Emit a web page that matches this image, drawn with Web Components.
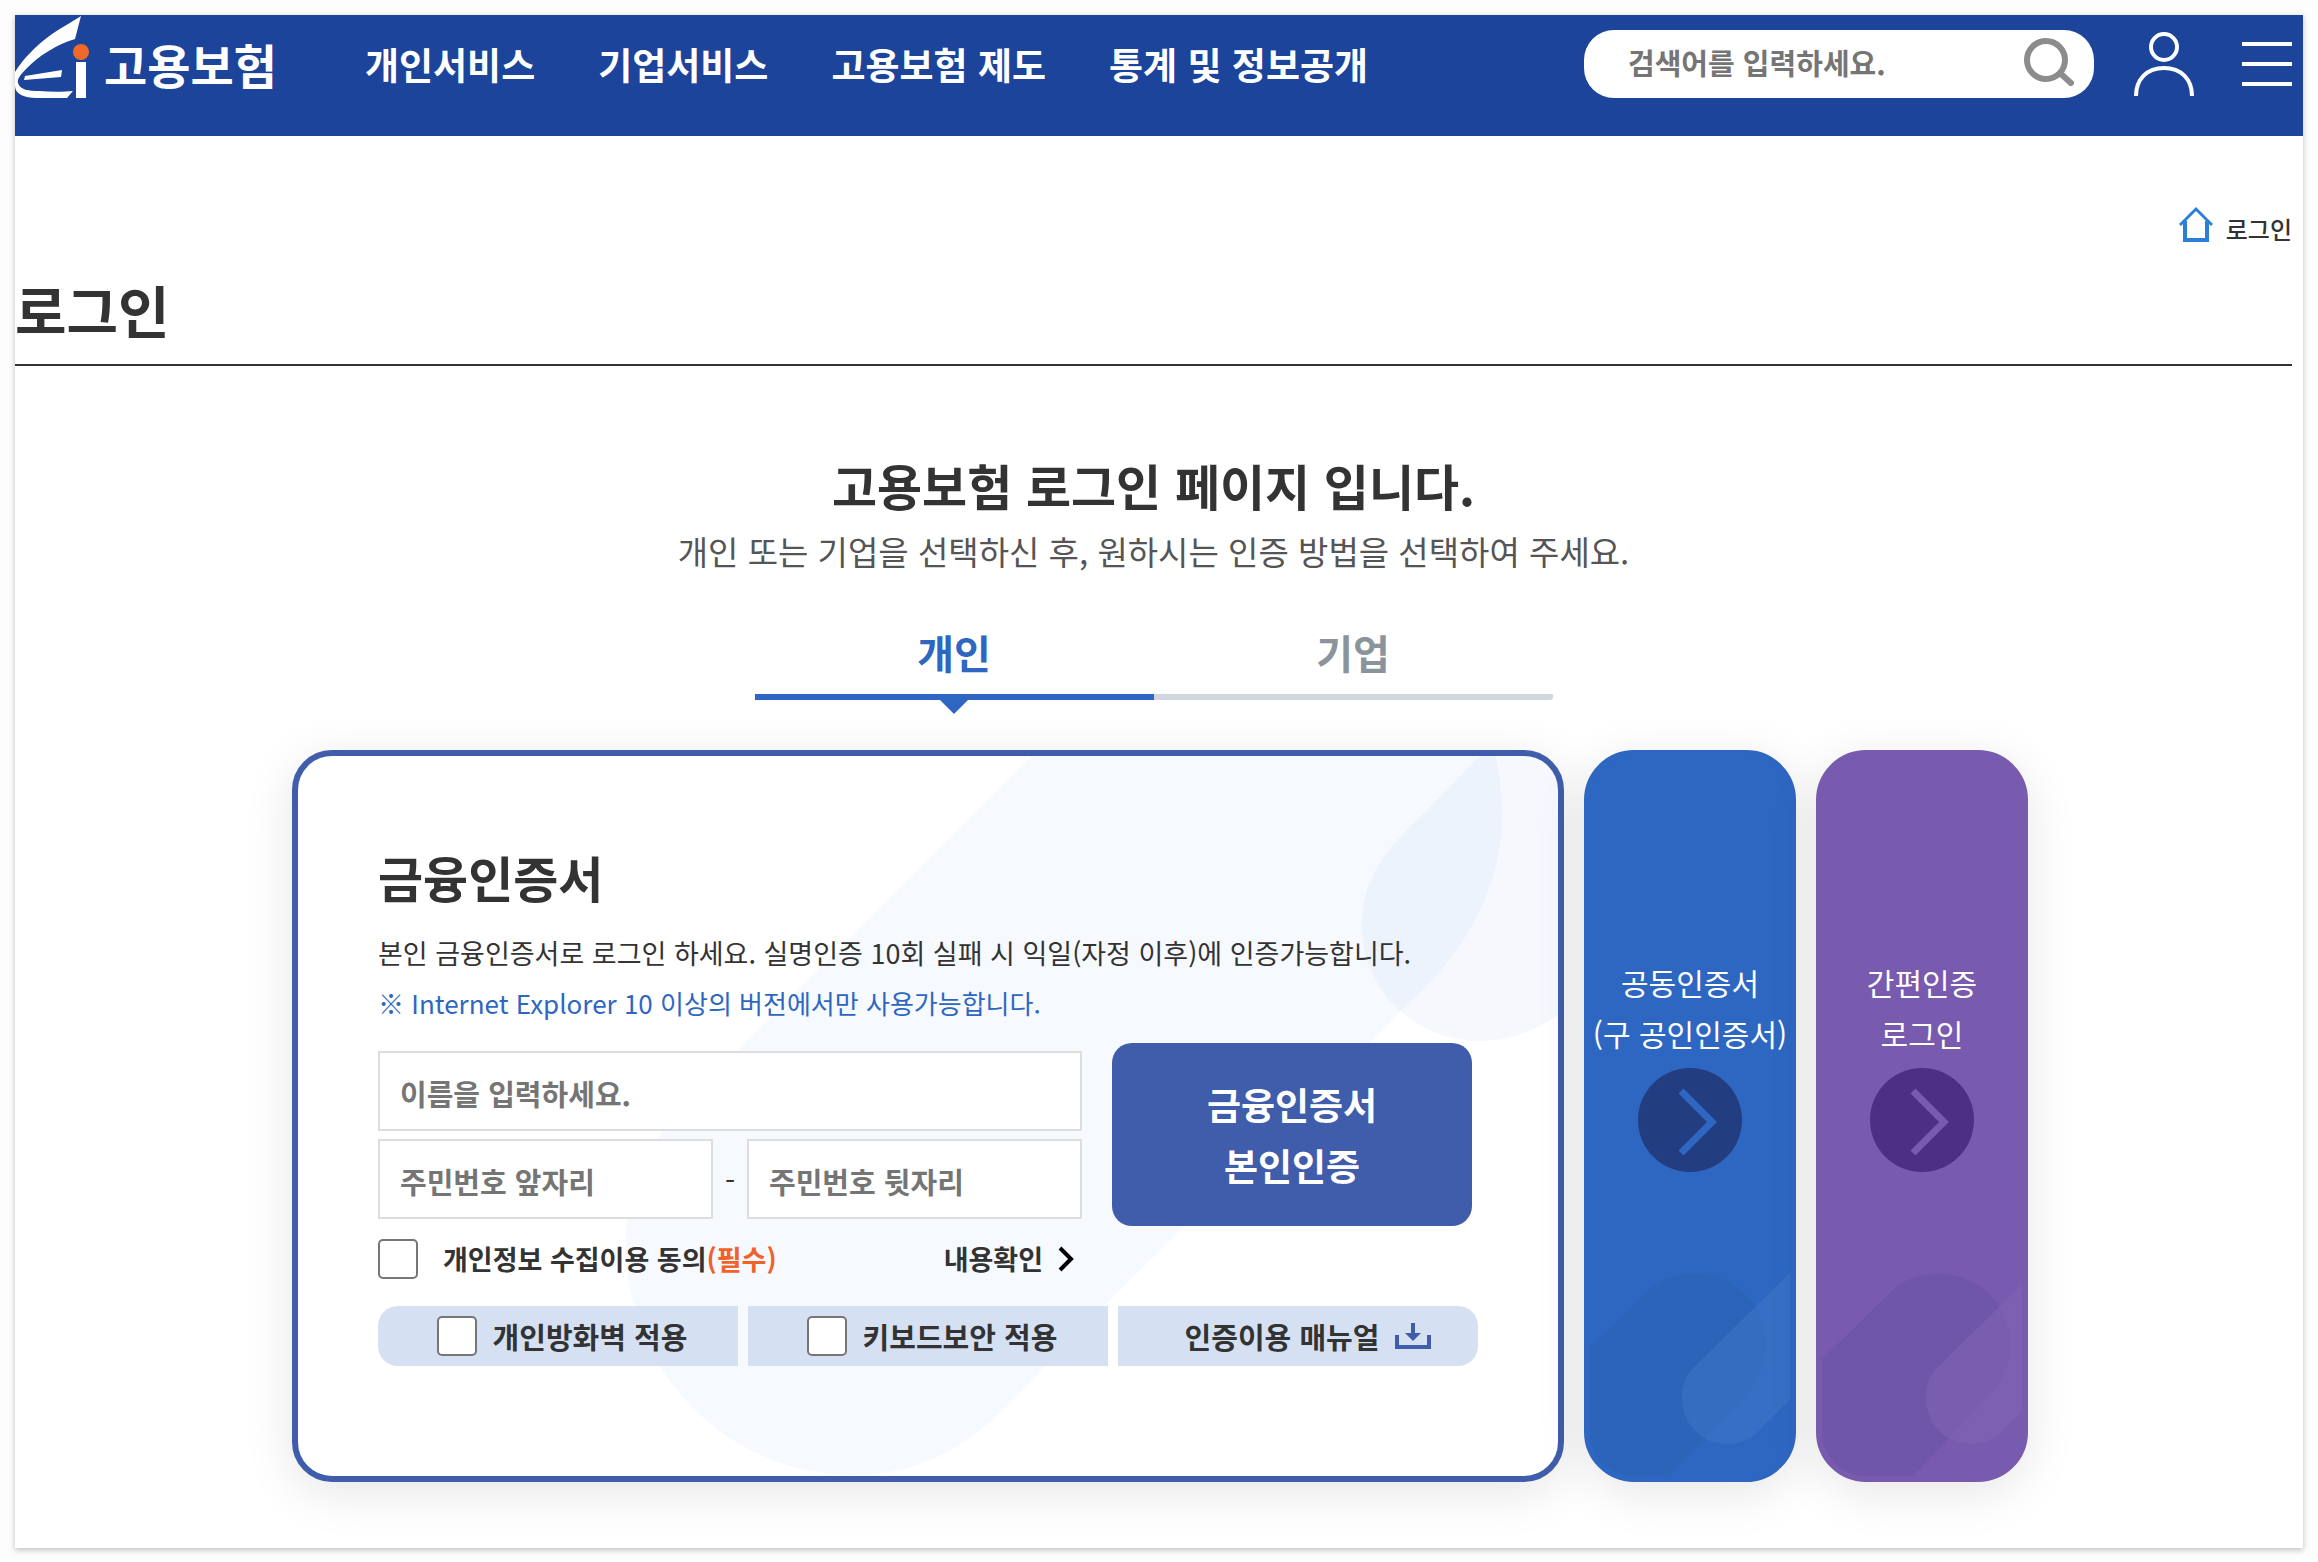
<!DOCTYPE html>
<html lang="ko">
<head>
<meta charset="utf-8">
<meta name="viewport" content="width=device-width, initial-scale=1">
<title>로그인 | 고용보험</title>
<style>
  body {
    margin: 0;
    padding: 15px 15px 14px;
    background-color: #fdfdfd;
    color: #333;
    font-family: "Noto Sans CJK KR", "Noto Sans", sans-serif;
  }
</style>
</head>
<body>
<ei-page>
  <ei-header slot="header">
    <a href="#">개인서비스</a>
    <a href="#">기업서비스</a>
    <a href="#">고용보험 제도</a>
    <a href="#">통계 및 정보공개</a>
  </ei-header>
  <ei-title>로그인</ei-title>
  <ei-intro>
    <span slot="heading">고용보험 로그인 페이지 입니다.</span>
    개인 또는 기업을 선택하신 후, 원하시는 인증 방법을 선택하여 주세요.
  </ei-intro>
  <ei-tabs></ei-tabs>
  <ei-methods>
    <ei-cert-card>
      <span slot="title">금융인증서</span>
      <span slot="desc">본인 금융인증서로 로그인 하세요. 실명인증 10회 실패 시 익일(자정 이후)에 인증가능합니다.</span>
      <span slot="note">※ Internet Explorer 10 이상의 버전에서만 사용가능합니다.</span>
      <ei-cert-form></ei-cert-form>
      <ei-tools slot="tools"></ei-tools>
    </ei-cert-card>
    <ei-method-card>공동인증서<br>(구 공인인증서)</ei-method-card>
    <ei-method-card tone="purple">간편인증<br>로그인</ei-method-card>
  </ei-methods>
</ei-page>

<script>
const base = /*html*/ `
  <style>
    :host, * { box-sizing: border-box; }
    :host { display: block; }
    button, input { font: inherit; color: inherit; margin: 0; }
    button { border: 0; padding: 0; background: none; cursor: pointer; }
    a, ::slotted(a) { color: inherit; text-decoration: none; }
    svg { display: block; flex: none; }
  </style>
`

const checkStyle = /*html*/ `
  <style>
    input[type="checkbox"] {
      appearance: none;
      flex: none;
      width: 40px;
      height: 40px;
      border: 2px solid #767676;
      border-radius: 5px;
      background-color: white;
    }
    input[type="checkbox"]:checked { background-color: #3f5dab; }
  </style>
`

// attaches the shadow root and fills it
function define(name, html) {
  const template = document.createElement("template")
  template.innerHTML = base + html

  customElements.define(name, class extends HTMLElement {
    constructor() {
      super()
      this.attachShadow({ mode: "open" })
      this.shadowRoot.appendChild(template.content.cloneNode(true))
    }
  })
}

define("ei-page", /*html*/ `
  <style>
    :host {
      background-color: white;
      box-shadow: 0 2px 6px rgba(0, 0, 0, .25);
    }
    main { padding: 70px 11px 66px 0; }
  </style>
  <slot name="header"></slot>
  <main><slot></slot></main>
`)

define("ei-header", /*html*/ `
  <style>
    header {
      display: flex;
      align-items: center;
      height: 121px;
      padding: 0 11px 23px 0;
      background-color: #1c449b;
      color: white;
    }
    .logo {
      display: flex;
      align-self: flex-start;
      gap: 14px;
      width: 261px;
      overflow: hidden;
      font-size: 47px;
      font-weight: bold;
      line-height: 98px;
      white-space: nowrap;
    }
    .logo svg { margin-top: 1px; }
    nav {
      display: flex;
      gap: 63px;
      margin-left: 89px;
      font-size: 37px;
      font-weight: bold;
      white-space: nowrap;
    }
    .search {
      display: flex;
      align-items: center;
      width: 510px;
      height: 68px;
      margin-left: auto;
      padding: 0 20px 4px 44px;
      border-radius: 30px;
      background-color: white;
    }
    .search input {
      flex: 1;
      min-width: 0;
      padding: 0;
      border: 0;
      outline: 0;
      color: #333;
      font-size: 29px;
      font-weight: bold;
    }
    .search input::placeholder { color: #757575; }
    .user { margin-left: 40px; }
    .menu { margin-left: 48px; }
  </style>
  <header>
    <a class="logo" href="#">
      <svg width="75" height="82" viewBox="0 0 75 82" aria-hidden="true">
        <path fill="white" d="M66 0 60 23C42 28 24 40 12 52 5 59 2 63 3 67 5 74 14 75 24 75 36 76 48 76 58 75L52 82H22C9 82 0 78 0 70V56C8 43 20 31 33 21 45 12 57 6 66 0Z"/>
        <path fill="white" d="M10 60 47 54 46 61 9 64Z"/>
        <path fill="white" d="M61 46H71V82H61Z"/>
        <circle cx="66" cy="36" r="8" fill="#f1692a"/>
      </svg>
      고용보험
    </a>
    <nav><slot></slot></nav>
    <form class="search" role="search">
      <input type="text" aria-label="검색어" placeholder="검색어를 입력하세요.">
      <button type="button" aria-label="검색">
        <svg width="50" height="48" viewBox="0 0 50 48" fill="none" stroke="#8c8c8c" stroke-width="6">
          <circle cx="22" cy="22" r="19"/>
          <path d="M36 35 49 47"/>
        </svg>
      </button>
    </form>
    <button class="user" type="button" aria-label="내 정보">
      <svg width="60" height="64" viewBox="0 0 60 64" fill="none" stroke="white" stroke-width="4">
        <circle cx="30" cy="15" r="13"/>
        <path d="M2 64C2 47 13 36 30 36S58 47 58 64"/>
      </svg>
    </button>
    <button class="menu" type="button" aria-label="전체 메뉴">
      <svg width="50" height="44" viewBox="0 0 50 44" stroke="white" stroke-width="4">
        <path d="M0 2H50M0 22H50M0 42H50"/>
      </svg>
    </button>
  </header>
`)

define("ei-title", /*html*/ `
  <style>
    .path {
      display: flex;
      justify-content: flex-end;
      gap: 13px;
      height: 36px;
      font-size: 24px;
      font-weight: 500;
      line-height: 46px;
    }
    h1 {
      margin: 20px 0 0;
      padding-bottom: 8px;
      border-bottom: 2px solid #333;
      font-size: 56px;
      font-weight: bold;
      line-height: 94px;
    }
  </style>
  <nav class="path" aria-label="현재 위치">
    <a href="#" aria-label="홈">
      <svg width="34" height="36" viewBox="0 0 34 36" fill="none" stroke="#2a7fd6" stroke-width="3">
        <path d="M1 19 17 3 33 19"/>
        <path d="M6 15V34H28V15" stroke-width="4"/>
      </svg>
    </a>
    <slot></slot>
  </nav>
  <h1>로그인</h1>
`)

define("ei-intro", /*html*/ `
  <style>
    :host { padding-top: 87px; text-align: center; }
    h2 {
      margin: 0 0 10px;
      font-size: 49px;
      font-weight: bold;
      line-height: 64px;
    }
    p {
      margin: 0;
      color: #555;
      font-size: 33px;
      line-height: 48px;
    }
  </style>
  <h2><slot name="heading"></slot></h2>
  <p><slot></slot></p>
`)

define("ei-tabs", /*html*/ `
  <style>
    .tabs {
      display: grid;
      grid-template-columns: 1fr 1fr;
      max-width: 798px;
      margin: 35px auto 50px;
    }
    button {
      position: relative;
      border-bottom: 6px solid #d1d7de;
      border-bottom-right-radius: 3px;
      color: #8c949b;
      font-size: 40px;
      font-weight: bold;
      line-height: 84px;
    }
    button[aria-selected="true"] {
      border-color: #2e67c1;
      border-radius: 0;
      color: #2e67c1;
    }
    button[aria-selected="true"]::after {
      content: "";
      position: absolute;
      top: 100%;
      left: 50%;
      margin: 6px 0 0 -14px;
      border: 14px solid transparent;
      border-top-color: #2e67c1;
      border-bottom: 0;
    }
  </style>
  <div class="tabs" role="tablist">
    <button type="button" role="tab" aria-selected="true">개인</button>
    <button type="button" role="tab" aria-selected="false">기업</button>
  </div>
`)

define("ei-methods", /*html*/ `
  <style>
    :host {
      display: flex;
      justify-content: center;
      gap: 20px;
      padding-left: 13px;
    }
  </style>
  <slot></slot>
`)

define("ei-cert-card", /*html*/ `
  <style>
    :host {
      display: grid;
      flex: 0 1 1272px;
      min-width: 0;
      overflow: hidden;
      border: 6px solid #3f5dab;
      border-radius: 40px;
      background-color: white;
      box-shadow: 0 10px 50px rgba(0, 0, 0, .1);
    }
    .leaves, article { grid-area: 1 / 1; }
    .leaves { width: 100%; height: 0; min-height: 100%; }
    article { padding: 91px 80px 110px; }
    h3 {
      margin: 0 0 21px;
      font-size: 49px;
      font-weight: bold;
      line-height: 60px;
    }
    p { margin: 0; font-size: 27px; line-height: 50px; }
    .note { color: #2e67c1; font-size: 26px; }
    .form { margin: 15px 0 27px; }
  </style>
  <svg class="leaves" viewBox="0 0 1260 720" preserveAspectRatio="xMaxYMin slice" aria-hidden="true">
    <path fill="#f6fafe" d="M734 0 402 332C350 384 328 430 328 489 328 616 430 719 556 719 640 719 692 674 750 606L1104 254C1160 205 1204 140 1204 57 1204 34 1201 14 1197 0Z"/>
    <path fill="#5078f0" fill-opacity=".05" d="M1182 0 1105 78C1075 110 1064 135 1064 170 1064 235 1118 285 1181 285 1210 285 1238 275 1260 259V0Z"/>
  </svg>
  <article>
    <h3><slot name="title"></slot></h3>
    <p><slot name="desc"></slot></p>
    <p class="note"><slot name="note"></slot></p>
    <div class="form"><slot></slot></div>
    <slot name="tools"></slot>
  </article>
`)

define("ei-cert-form", checkStyle + /*html*/ `
  <style>
    form {
      display: grid;
      grid-template-columns: minmax(0, 704px) 360px;
      gap: 30px;
      align-items: start;
    }
    .fields { display: grid; gap: 8px; padding-top: 8px; }
    input[type="text"], input[type="password"] {
      width: 100%;
      min-width: 0;
      height: 80px;
      padding: 4px 20px 0;
      border: 2px solid #ddd;
      border-radius: 0;
      background-color: white;
      font-size: 29px;
      font-weight: bold;
    }
    input::placeholder { color: #757575; }
    .number {
      display: grid;
      grid-template-columns: 1fr 34px 1fr;
      align-items: center;
      text-align: center;
      font-size: 29px;
    }
    .consent {
      display: flex;
      align-items: center;
      height: 40px;
      margin-top: 12px;
      font-size: 27px;
      font-weight: bold;
      line-height: 40px;
      white-space: nowrap;
    }
    .consent label { margin-left: 25px; }
    .consent em { color: #f0622a; font-style: normal; }
    .consent a {
      display: flex;
      align-items: center;
      gap: 15px;
      margin-left: auto;
      padding-right: 8px;
    }
    .submit {
      height: 183px;
      border-radius: 20px;
      background-color: #3f5dab;
      color: white;
      font-size: 37px;
      font-weight: bold;
      line-height: 61px;
    }
  </style>
  <form>
    <div class="fields">
      <input type="text" aria-label="이름" placeholder="이름을 입력하세요.">
      <div class="number">
        <input type="text" aria-label="주민번호 앞자리" placeholder="주민번호 앞자리">
        <span>-</span>
        <input type="password" aria-label="주민번호 뒷자리" placeholder="주민번호 뒷자리">
      </div>
      <div class="consent">
        <input type="checkbox" id="agree">
        <label for="agree">개인정보 수집이용 동의<em>(필수)</em></label>
        <a href="#">내용확인
          <svg width="16" height="26" viewBox="0 0 16 26" fill="none" stroke="black" stroke-width="4">
            <path d="M2 2 13 13 2 24"/>
          </svg>
        </a>
      </div>
    </div>
    <button class="submit" type="button">금융인증서<br>본인인증</button>
  </form>
`)

define("ei-tools", checkStyle + /*html*/ `
  <style>
    :host {
      display: grid;
      grid-template-columns: repeat(3, 1fr);
      gap: 10px;
      font-size: 29px;
      font-weight: bold;
      white-space: nowrap;
    }
    label, a {
      display: flex;
      align-items: center;
      justify-content: center;
      gap: 16px;
      height: 60px;
      background-color: #d5e1f3;
    }
    label { padding-right: 0; padding-left: 8px; }
    label:first-of-type { border-radius: 20px 0 0 20px; }
    a { padding-left: 20px; border-radius: 0 20px 20px 0; }
  </style>
  <label><input type="checkbox">개인방화벽 적용</label>
  <label><input type="checkbox">키보드보안 적용</label>
  <a href="#">인증이용 매뉴얼
    <svg width="36" height="26" viewBox="0 0 36 26" fill="none" stroke="#3f5dab">
      <path stroke-width="4" d="M2 12V24H34V12M18 0V12"/>
      <path fill="#3f5dab" stroke="none" d="M10 10H26L18 18Z"/>
    </svg>
  </a>
`)

define("ei-method-card", /*html*/ `
  <style>
    :host {
      --card: #2e67c1;
      --circle: #223d80;
      --dark: #2b64b9;
      --light: #4078ca;
      --shift: 0px;
      display: grid;
      flex: 0 0 212px;
      overflow: hidden;
      border: 6px solid var(--card);
      border-radius: 50px;
      background-color: var(--card);
      box-shadow: 0 10px 50px rgba(0, 0, 0, .1);
      color: white;
    }
    :host([tone="purple"]) {
      --card: #785aae;
      --circle: #4d2f86;
      --dark: #6f56a8;
      --light: #8465b6;
      --shift: 12px;
    }
    .leaves, button { grid-area: 1 / 1; }
    .leaves { width: 100%; height: 0; min-height: 100%; }
    .leaves g { transform: translateX(var(--shift)); }
    button {
      display: flex;
      flex-direction: column;
      align-items: center;
      gap: 9px;
      padding-top: 201px;
      font-size: 30px;
      line-height: 51px;
      white-space: nowrap;
    }
  </style>
  <svg class="leaves" viewBox="0 0 200 720" preserveAspectRatio="xMidYMax slice" aria-hidden="true">
    <g>
      <path fill="var(--dark)" d="M-20 611 62 531C74 522 89 518 106 518 145 518 176 549 176 588 176 610 168 628 154 641L79 720H-20Z"/>
      <path fill="var(--light)" fill-opacity=".5" d="M220 497 103 612C95 620 92 630 92 642 92 668 112 688 137 688 152 688 164 682 173 670L220 624Z"/>
    </g>
  </svg>
  <button type="button">
    <span><slot></slot></span>
    <svg width="104" height="104" viewBox="0 0 104 104" aria-hidden="true">
      <circle cx="52" cy="52" r="52" fill="var(--circle)"/>
      <path d="M43 23 74 54 43 85" fill="none" stroke="var(--card)" stroke-width="7"/>
    </svg>
  </button>
`)
</script>
</body>
</html>
